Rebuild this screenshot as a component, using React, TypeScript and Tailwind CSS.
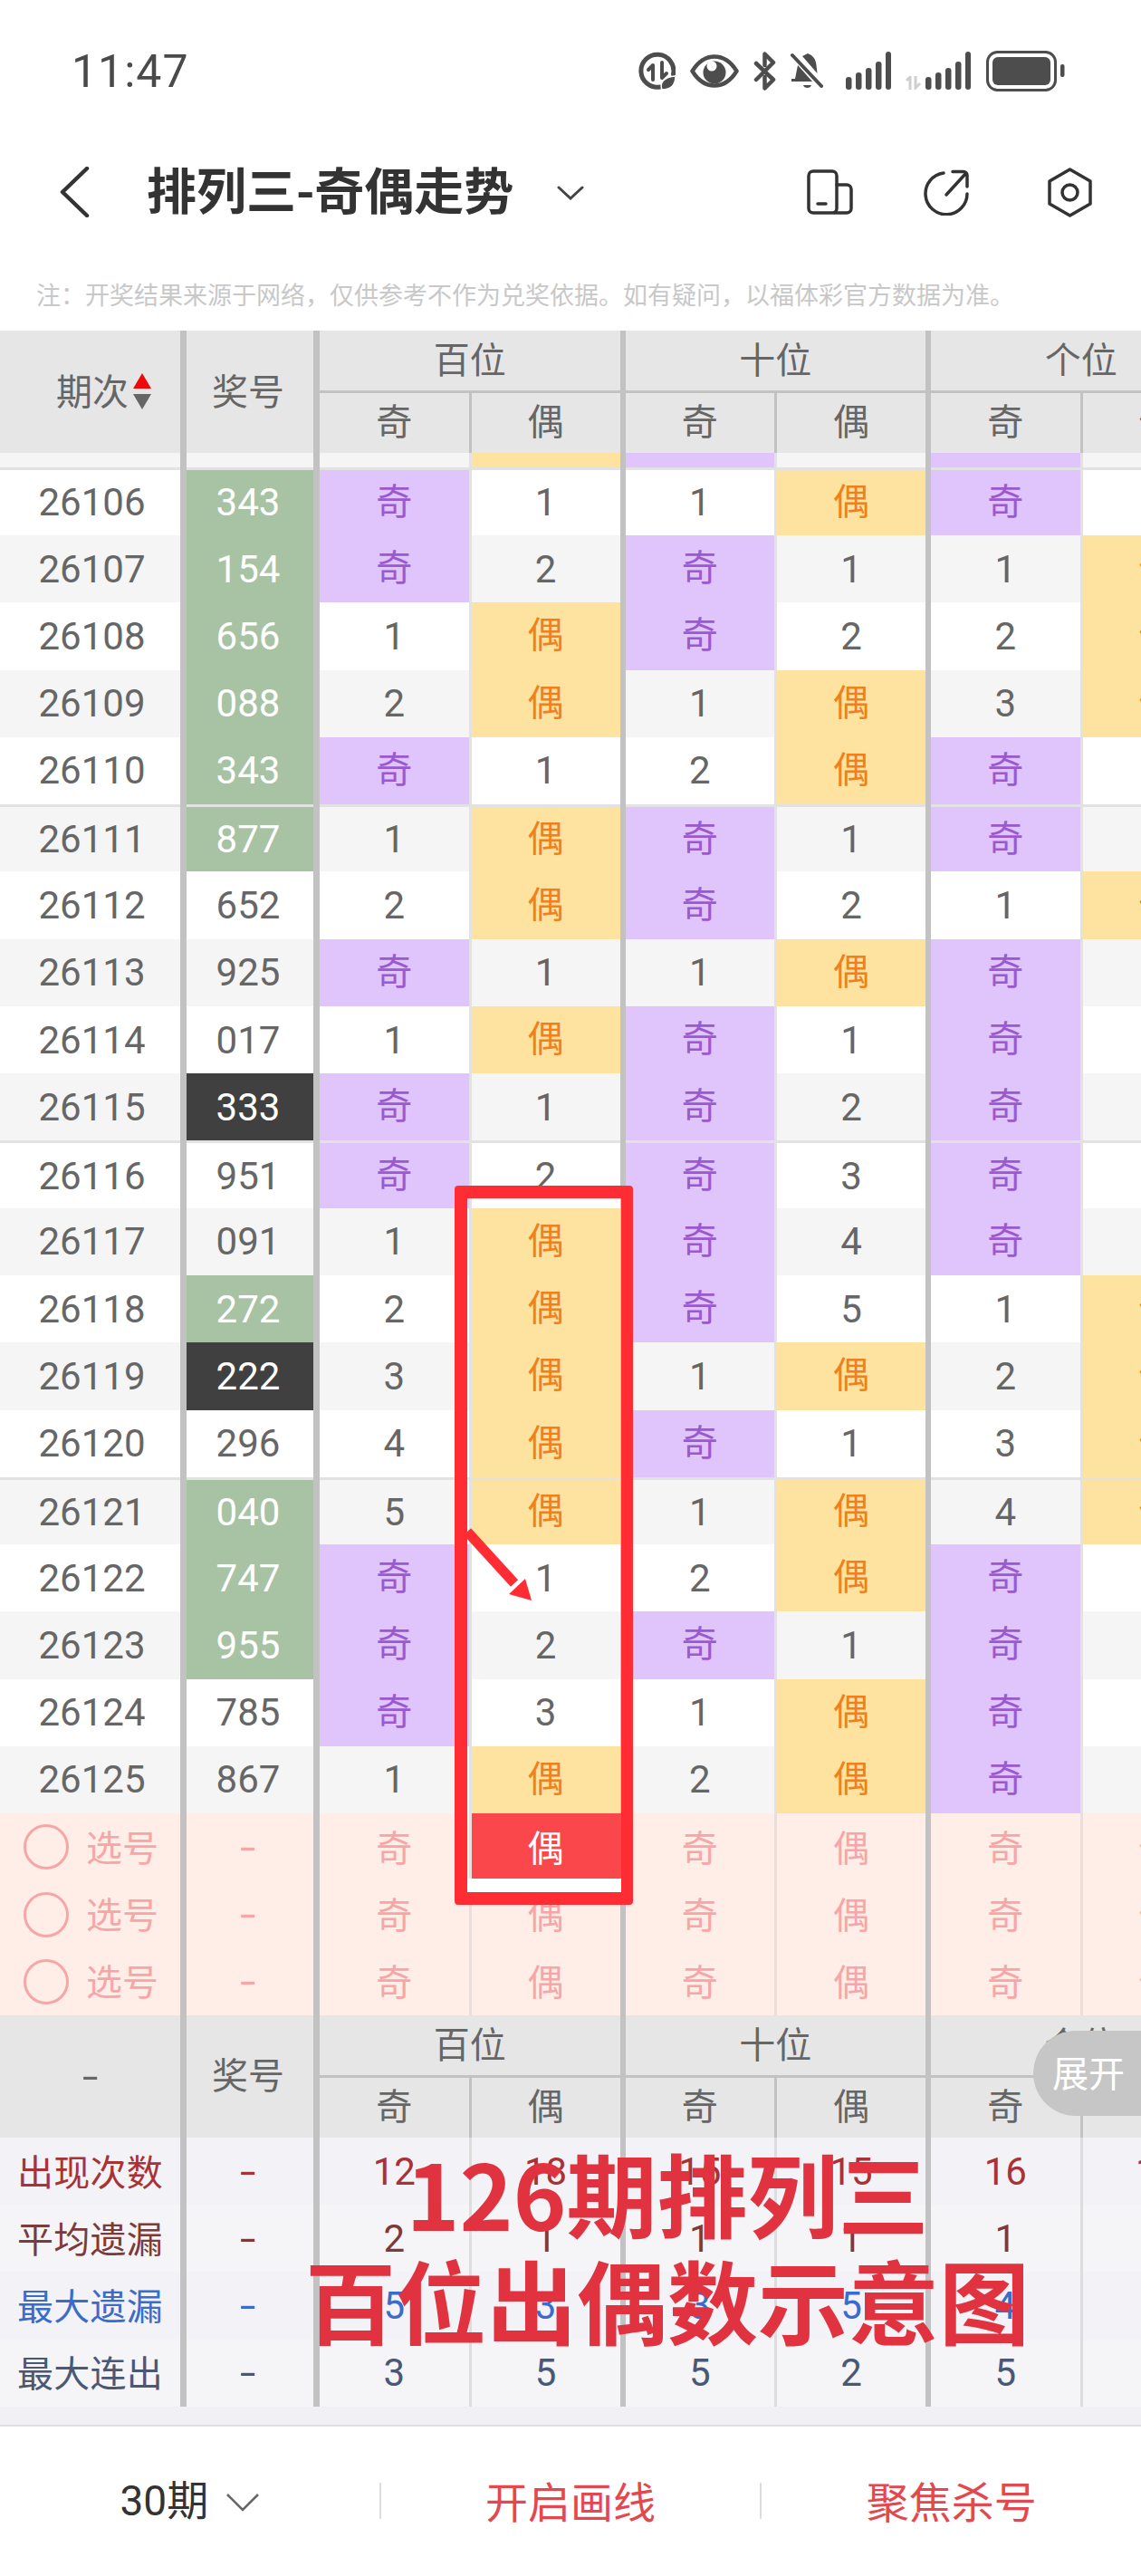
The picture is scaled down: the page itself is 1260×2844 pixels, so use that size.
import React from "react";

const FONT = "font-['Noto_Sans_CJK_SC','Noto_Sans',sans-serif]";
const COLS = "grid grid-cols-[206px_147px_167.5px_170px_167.5px_170px_167.5px_170px] w-[1366px]";

type Row = [string, string, "g" | "d" | "n", string, string, string];
const rows: Row[] = [
  ["26106", "343", "g", "奇1", "1偶", "奇1"],
  ["26107", "154", "g", "奇2", "奇1", "1偶"],
  ["26108", "656", "g", "1偶", "奇2", "2偶"],
  ["26109", "088", "g", "2偶", "1偶", "3偶"],
  ["26110", "343", "g", "奇1", "2偶", "奇1"],
  ["26111", "877", "g", "1偶", "奇1", "奇2"],
  ["26112", "652", "n", "2偶", "奇2", "1偶"],
  ["26113", "925", "n", "奇1", "1偶", "奇1"],
  ["26114", "017", "n", "1偶", "奇1", "奇2"],
  ["26115", "333", "d", "奇1", "奇2", "奇3"],
  ["26116", "951", "n", "奇2", "奇3", "奇4"],
  ["26117", "091", "n", "1偶", "奇4", "奇5"],
  ["26118", "272", "g", "2偶", "奇5", "1偶"],
  ["26119", "222", "d", "3偶", "1偶", "2偶"],
  ["26120", "296", "n", "4偶", "奇1", "3偶"],
  ["26121", "040", "g", "5偶", "1偶", "4偶"],
  ["26122", "747", "g", "奇1", "2偶", "奇1"],
  ["26123", "955", "g", "奇2", "奇1", "奇2"],
  ["26124", "785", "n", "奇3", "1偶", "奇3"],
  ["26125", "867", "n", "1偶", "2偶", "奇4"],
];

const stats = [
  { label: "出现次数", color: "text-[#a83236]", bg: "bg-[#f2f2f7]", vals: ["12", "18", "15", "15", "16", "14"] },
  { label: "平均遗漏", color: "text-[#7d3a3a]", bg: "bg-[#f5f5f7]", vals: ["2", "1", "1", "1", "1", "1"] },
  { label: "最大遗漏", color: "text-[#3b6cc9]", bg: "bg-[#f2f2f7]", vals: ["5", "3", "3", "5", "4", "3"] },
  { label: "最大连出", color: "text-[#4a5876]", bg: "bg-[#f5f5f7]", vals: ["3", "5", "5", "2", "5", "4"] },
];

const isCjk = (s: string) => s === "奇" || s === "偶";

function sep(i: number) {
  return i % 2 === 0 ? "border-r-[3px]" : "border-r-[6px] border-r-[#c2c2c2]";
}

const Dash = () => <span className="inline-block scale-x-150 font-['Roboto',sans-serif] text-[42px]">-</span>;

function DataCell({ text, i, bg, top }: { text: string; i: number; bg: string; top?: boolean }) {
  const odd = text === "奇";
  const even = text === "偶";
  const fill = odd ? "bg-[#e0c5fd] text-[#9b59d0]" : even ? "bg-[#fee2a0] text-[#f0801e]" : `${bg} text-[#666666]`;
  return (
    <div className={`${sep(i)} ${i % 2 === 1 ? "border-r-[#c2c2c2]" : "border-r-[#e2e2e2]"}`}>
      <div className={`h-full flex items-center justify-center ${fill} ${top ? "border-t-[3px] border-t-[#e2e2e2]" : ""} ${isCjk(text) ? "text-[40px]" : "text-[42px] font-['Roboto',sans-serif]"}`}>
        {text}
      </div>
    </div>
  );
}

function Header({ sort }: { sort?: boolean }) {
  const group = ["百位", "十位", "个位"];
  const sub = ["奇", "偶", "奇", "偶", "奇", "偶"];
  return (
    <div className={`${COLS} grid-rows-[69px_66px] h-[135px] bg-[#e6e6e6] text-[#666666] text-[40px]`}>
      <div className={`row-span-2 border-r-[7px] border-r-[#c2c2c2] flex items-center justify-center pb-[6px] ${sort ? "pl-[22px]" : "pl-1"}`}>
        {sort ? (
          <>
            <span className="ml-2">期次</span>
            <span className="flex flex-col gap-[6px] ml-[5px] mt-[5px]">
              <span className="block w-0 h-0 border-x-[10px] border-x-transparent border-b-[17px] border-b-[#ee0a0a]" />
              <span className="block w-0 h-0 border-x-[10px] border-x-transparent border-t-[17px] border-t-[#666666]" />
            </span>
          </>
        ) : (
          <span className="pr-1 pt-[6px]">
            <Dash />
          </span>
        )}
      </div>
      <div className="row-span-2 border-r-[7px] border-r-[#c2c2c2] flex items-center justify-center pr-1 pb-[6px]">奖号</div>
      {group.map((g) => (
        <div key={g} className="col-span-2 border-b-[3px] border-b-[#c2c2c2] border-r-[6px] border-r-[#c2c2c2] flex items-center justify-center pb-[6px]">
          {g}
        </div>
      ))}
      {sub.map((s, i) => (
        <div key={i} className={`${sep(i)} border-r-[#c2c2c2] flex items-center justify-center pb-[8px]`}>
          {s}
        </div>
      ))}
    </div>
  );
}

const Data = () => (
  <svg width="41" height="43" viewBox="0 0 41 43" fill="none">
    <path d="M24 39a18 18 0 1 1 14.500-14" stroke="#4d4d4d" strokeWidth="5" strokeLinecap="round" />
    <path d="M11 20l5-5v16M26 12v17l5-5" stroke="#4d4d4d" strokeWidth="4" strokeLinecap="round" strokeLinejoin="round" />
    <path d="M26 42c-3-8 2-14 15-15 0 9-5 15-15 15z" fill="#4d4d4d" stroke="#fff" strokeWidth="1.500" />
  </svg>
);
const Eye = () => (
  <svg width="54" height="37" viewBox="0 0 54 37" fill="none">
    <path d="M2.500 18.500C9 8 17 2.500 27 2.500S45 8 51.500 18.500C45 29 37 34.500 27 34.500S9 29 2.500 18.500z" stroke="#4d4d4d" strokeWidth="4.500" strokeLinejoin="round" />
    <circle cx="27" cy="20" r="12.500" fill="#4d4d4d" />
    <circle cx="24" cy="13" r="5.500" fill="#fff" />
  </svg>
);
const BtOff = () => (
  <svg width="25" height="43" viewBox="0 0 25 43" fill="none">
    <path d="M3 13l19 18-9.500 9.500V28M12.500 15V2.500L22 12 3 31" stroke="#4d4d4d" strokeWidth="4.500" strokeLinecap="round" strokeLinejoin="round" />
  </svg>
);
const BellOff = () => (
  <svg width="36" height="42" viewBox="0 0 36 42" fill="none">
    <path d="M9 10L5 30H1v3h27L9 10zM19 2c6 2 9 7 9.500 13l1 9L13 5z" fill="#4d4d4d" />
    <path d="M2 3l32 36" stroke="#fff" strokeWidth="7" />
    <path d="M2 4l32 34" stroke="#4d4d4d" strokeWidth="4" strokeLinecap="round" />
    <path d="M14 37h9c-1 4-8 4-9 0z" fill="#4d4d4d" />
  </svg>
);
const Bars = () => (
  <svg width="50" height="42" viewBox="0 0 50 42" fill="#4d4d4d">
    <rect x="0" y="28" width="6.500" height="14" rx="3" />
    <rect x="11" y="23" width="6.500" height="19" rx="3" />
    <rect x="22" y="18" width="6.500" height="24" rx="3" />
    <rect x="33" y="11" width="6.500" height="31" rx="3" />
    <rect x="44" y="0" width="6" height="42" rx="3" />
  </svg>
);
const GrayArrows = () => (
  <svg width="18" height="15" viewBox="0 0 18 15" fill="none" stroke="#cfcfcf" strokeWidth="3">
    <path d="M1 5l4-4v14M11 0v13l5-5" />
  </svg>
);
const Battery = () => (
  <svg width="87" height="45" viewBox="0 0 87 45" fill="none">
    <rect x="1.500" y="1.500" width="75" height="42" rx="11" stroke="#4d4d4d" strokeWidth="3" />
    <rect x="7" y="7" width="64" height="31" rx="6" fill="#4d4d4d" />
    <rect x="82" y="15" width="4.500" height="14" rx="2" fill="#4d4d4d" />
  </svg>
);
const Screens = () => (
  <svg width="51" height="50" viewBox="0 0 51 50" fill="none" stroke="#333" strokeWidth="3.500" strokeLinecap="round" strokeLinejoin="round">
    <rect x="2" y="2" width="31" height="46" rx="5" />
    <path d="M33 17h11a5 5 0 0 1 5 5v21a5 5 0 0 1-5 5H30" />
    <path d="M12 38h9" />
  </svg>
);
const Share = () => (
  <svg width="50" height="51" viewBox="0 0 50 51" fill="none" stroke="#333" strokeWidth="3.500" strokeLinecap="round" strokeLinejoin="round">
    <path d="M22 4A23 23 0 1 0 48 27" />
    <path d="M25 28L47 4M32 2.500h12a4 4 0 0 1 4 4V19" />
  </svg>
);
const Hex = () => (
  <svg width="49" height="55" viewBox="0 0 49 55" fill="none" stroke="#333" strokeWidth="3.500" strokeLinejoin="round">
    <path d="M24.500 2L47 15v25L24.500 53 2 40V15z" />
    <circle cx="24.500" cy="27.500" r="8.500" />
  </svg>
);

export default function App() {
  return (
    <div className={`relative w-[1260px] h-[2844px] overflow-hidden bg-white ${FONT}`}>
      {/* status bar */}
      <div className="h-[156px] flex items-center pl-[79px] pr-[84.5px]">
        <span className="text-[50px] leading-none text-[#4a4a4a] font-['Roboto',sans-serif] tracking-[1px] pt-[2px]">11:47</span>
        <div className="ml-auto flex items-center">
          <Data />
          <span className="w-4" />
          <Eye />
          <span className="w-4" />
          <BtOff />
          <span className="w-4" />
          <BellOff />
          <span className="w-[25px]" />
          <Bars />
          <span className="w-4" />
          <div className="flex items-end gap-1 h-[42px]">
            <GrayArrows />
            <Bars />
          </div>
          <span className="w-[16.5px]" />
          <Battery />
        </div>
      </div>

      {/* nav */}
      <div className="h-[112px] flex items-center pl-[65px] pr-[54px]">
        <svg width="34" height="56" viewBox="0 0 34 56" fill="none" stroke="#333" strokeWidth="4.500" strokeLinecap="round" strokeLinejoin="round">
          <path d="M31 2L4 28l27 26" />
        </svg>
        <h1 className="ml-[63px] pb-[10px] text-[55px] font-bold leading-none text-[#333333] whitespace-nowrap">排列三-奇偶走势</h1>
        <svg width="30" height="16" viewBox="0 0 30 16" fill="none" stroke="#444" strokeWidth="3" strokeLinecap="round" className="ml-[48px] mt-[2px]">
          <path d="M2 2l13 12L28 2" />
        </svg>
        <div className="ml-auto flex items-center">
          <Screens />
          <span className="w-[78px]" />
          <Share />
          <span className="w-[87px]" />
          <Hex />
        </div>
      </div>

      {/* note */}
      <div className="h-[97px] flex items-center pt-[17px] pl-[40px] text-[27px] text-[#c8c8c8] whitespace-nowrap">
        注：开奖结果来源于网络，仅供参考不作为兑奖依据。如有疑问，以福体彩官方数据为准。
      </div>

      {/* table head */}
      <Header sort />

      {/* partially scrolled row */}
      <div className={`${COLS} h-[15.500px]`}>
        <div className="bg-[#f5f5f5] border-r-[7px] border-r-[#c2c2c2]" />
        <div className="bg-[#f5f5f5] border-r-[7px] border-r-[#c2c2c2]" />
        {["", "y", "p", "", "p", ""].map((k, i) => (
          <div key={i} className={`${sep(i)} ${i % 2 === 1 ? "border-r-[#c2c2c2]" : "border-r-[#e2e2e2]"} ${k === "y" ? "bg-[#fee2a0]" : k === "p" ? "bg-[#e0c5fd]" : "bg-[#f5f5f5]"}`} />
        ))}
      </div>

      {/* data rows */}
      {rows.map((r, idx) => {
        const bg = idx % 2 === 0 ? "bg-white" : "bg-[#f5f5f5]";
        const top = idx % 5 === 0;
        const prize =
          r[2] === "g" ? "bg-[#a8c3a4] text-white" : r[2] === "d" ? "bg-[#404040] text-white" : `${bg} text-[#666666]`;
        const cells = [r[3][0], r[3][1], r[4][0], r[4][1], r[5][0], r[5][1]];
        return (
          <div key={r[0]} className={`${COLS} ${idx === 0 ? "h-[75.570px]" : "h-[74.270px]"} font-['Roboto','Noto_Sans_CJK_SC',sans-serif]`}>
            <div className="border-r-[7px] border-r-[#c2c2c2]">
              <div className={`h-full flex items-center justify-center pl-1 text-[42px] text-[#666666] ${bg} ${top ? "border-t-[3px] border-t-[#e2e2e2]" : ""}`}>{r[0]}</div>
            </div>
            <div className="border-r-[7px] border-r-[#c2c2c2]">
              <div className={`h-full flex items-center justify-center pr-1 text-[42px] ${prize} ${top ? "border-t-[3px] border-t-[#e2e2e2]" : ""}`}>{r[1]}</div>
            </div>
            {cells.map((c, i) => (
              <DataCell key={i} text={c} i={i} bg={bg} top={top} />
            ))}
          </div>
        );
      })}

      {/* selection rows */}
      {[0, 1, 2].map((n) => (
        <div key={n} className={`${COLS} h-[74.270px] bg-[#ffeee8] text-[#f7a6a8] text-[40px]`}>
          <div className="border-r-[7px] border-r-[#c2c2c2] flex items-center pl-[26px] gap-[19px]">
            <span className="block w-[50px] h-[50px] rounded-full border-[3px] border-[#f7a6a8]" />
            <span className="pb-[3px]">选号</span>
          </div>
          <div className="border-r-[7px] border-r-[#c2c2c2] flex items-center justify-center pr-1">
            <Dash />
          </div>
          {["奇", "偶", "奇", "偶", "奇", "偶"].map((c, i) => (
            <div key={i} className={`${sep(i)} ${n === 0 && i === 1 ? "bg-[#f9474b] text-white border-r-[#f9474b]" : i % 2 === 1 ? "border-r-[#c2c2c2]" : "border-r-[#eadfda]"} flex items-center justify-center pb-[3px]`}>
              {c}
            </div>
          ))}
        </div>
      ))}

      {/* footer head */}
      <Header />

      {/* stats */}
      {stats.map((s) => (
        <div key={s.label} className={`${COLS} h-[74.250px] ${s.bg} ${s.color} font-['Roboto','Noto_Sans_CJK_SC',sans-serif]`}>
          <div className="border-r-[7px] border-r-[#c2c2c2] flex items-center justify-center text-[40px] tracking-[0.3px] pb-[3px] font-['Noto_Sans_CJK_SC',sans-serif]">{s.label}</div>
          <div className="border-r-[7px] border-r-[#c2c2c2] flex items-center justify-center pr-1">
            <Dash />
          </div>
          {s.vals.map((v, i) => (
            <div key={i} className={`${sep(i)} ${i % 2 === 1 ? "border-r-[#c2c2c2]" : "border-r-[#dddddd]"} flex items-center justify-center text-[42px]`}>
              {v}
            </div>
          ))}
        </div>
      ))}
      <div className="h-[20px] bg-[#f1f1f5]" />

      {/* bottom bar */}
      <div className="h-[167px] border-t-2 border-t-[#e0e0e0] flex items-center text-[47px]">
        <div className="flex-1 flex items-center justify-center text-[#333333]">
          <span className="font-['Roboto','Noto_Sans_CJK_SC',sans-serif] text-[46px]">30期</span>
          <svg width="36" height="22" viewBox="0 0 36 22" fill="none" stroke="#666" strokeWidth="2.500" className="ml-[20px] mt-1">
            <path d="M1 2l17 17L35 2" />
          </svg>
        </div>
        <div className="w-[2px] h-[40px] bg-[#dddddd]" />
        <div className="flex-1 text-center text-[#e5474f] pb-[3px]">开启画线</div>
        <div className="w-[2px] h-[40px] bg-[#dddddd]" />
        <div className="flex-1 text-center text-[#e5474f] pb-[3px]">聚焦杀号</div>
      </div>

      {/* expand button */}
      <div className="absolute left-[1141px] top-[2242px] w-[119px] h-[94px] rounded-l-[47px] bg-[#c6c6c6] text-white text-[40px] flex items-center justify-end pr-[18px] pb-[4px]">
        展开
      </div>

      {/* annotation: red frame */}
      <div className="absolute left-[502px] top-[1309px] w-[197px] h-[794px] rounded-[4px] border-y-[14px] border-l-[14px] border-r-[13px] border-[#ff2d33]">
        <div className="absolute left-0 right-0 bottom-0 h-[15px] bg-white" />
      </div>

      {/* annotation: arrow */}
      <svg className="absolute left-[510px] top-[1680px]" width="85" height="95" viewBox="0 0 85 95" fill="#ff2d33">
        <path d="M6 11L58 68" stroke="#ff2d33" strokeWidth="11" />
        <path d="M77 87L52 80L70 63z" />
      </svg>

      {/* annotation: caption */}
      <div className="absolute left-[337px] top-[2361px] w-[800px] text-center text-[100px] leading-[118px] font-bold text-[#e1323f] whitespace-nowrap">
        <div>126期排列三</div>
        <div>百位出偶数示意图</div>
      </div>
    </div>
  );
}
